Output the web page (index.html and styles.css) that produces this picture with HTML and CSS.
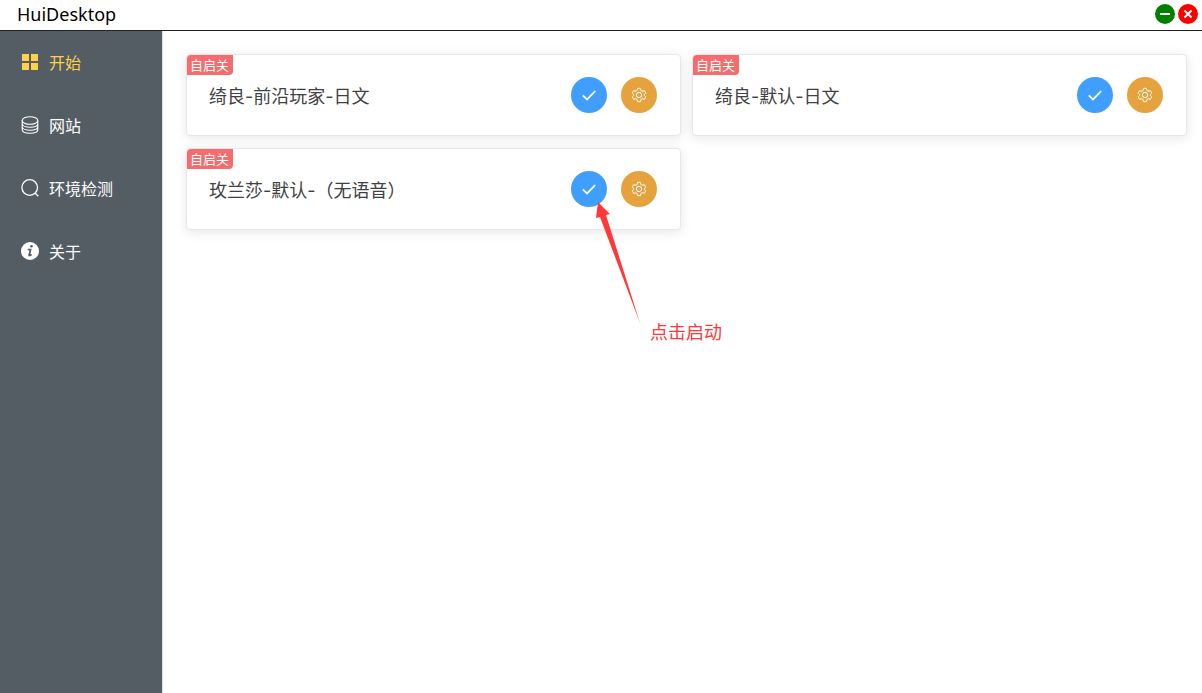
FILE: index.html
```html
<!DOCTYPE html>
<html lang="zh-CN">

<head>
    <meta charset="UTF-8" />
    <meta name="viewport" content="width=device-width, initial-scale=1.0" />
    <title>HuiDesktop</title>
    <link rel="stylesheet" href="styles.css">
</head>

<body>
    <!-- Shared icons -->
    <svg class="sprite" aria-hidden="true">
        <symbol id="check" viewBox="0 0 18 18">
            <path d="M2 9.500 6.800 14 16 4.500" fill="none" stroke="currentColor" stroke-width="2" />
        </symbol>
        <symbol id="gear" viewBox="0 0 18 18">
            <path d="M7.400 1.500h3.200l.6 2.500 1.400.8 2.400-.7 1.600 2.900-1.800 1.700v.6l1.800 1.700-1.600 2.900-2.400-.7-1.400.8-.6 2.500H7.400l-.6-2.500-1.400-.8-2.400.7-1.600-2.900 1.800-1.700v-.6L1.400 7l1.600-2.900 2.400.7 1.400-.8z" fill="none" stroke="currentColor" stroke-width="1.100" stroke-linejoin="round" />
            <circle cx="9" cy="9" r="3" fill="none" stroke="currentColor" stroke-width="1.100" />
        </symbol>
    </svg>

    <header class="titlebar">
        <h1>HuiDesktop</h1>
        <div class="window-buttons">
            <button class="minimize" aria-label="最小化">
                <svg viewBox="0 0 20 20"><path d="M5 10h10" /></svg>
            </button>
            <button class="close" aria-label="关闭">
                <svg viewBox="0 0 20 20"><path d="M6.500 6.500l7 7M13.500 6.500l-7 7" /></svg>
            </button>
        </div>
    </header>

    <div class="layout">
        <nav class="sidebar">
            <a class="active" href="#start">
                <svg viewBox="0 0 18 18" fill="currentColor">
                    <path d="M1 1h7v7H1zM10 1h7v7h-7zM1 10h7v7H1zM10 10h7v7h-7z" />
                </svg>
                开始
            </a>
            <a href="#sites">
                <svg viewBox="0 0 18 18" fill="none" stroke="currentColor" stroke-width="1.100">
                    <ellipse cx="9" cy="4.500" rx="7.800" ry="3.800" />
                    <path d="M1.200 4.500v9c0 5 15.600 5 15.600 0v-9M1.200 7.500c0 5 15.600 5 15.600 0M1.200 10.500c0 5 15.600 5 15.600 0" />
                </svg>
                网站
            </a>
            <a href="#check-env">
                <svg viewBox="0 0 18 18" fill="none" stroke="currentColor" stroke-width="1.300">
                    <circle cx="8.700" cy="8.500" r="7.800" />
                    <path d="M14 14l3.300 3.300" />
                </svg>
                环境检测
            </a>
            <a href="#about">
                <svg viewBox="0 0 18 18">
                    <circle cx="9" cy="9" r="9" fill="currentColor" />
                    <circle cx="10.500" cy="4.300" r="1.300" fill="#545c64" />
                    <path d="M6.700 7.500h2.900L8.100 13.200q0 1.200 2.500-.9" fill="none" stroke="#545c64" stroke-width="1.700" />
                </svg>
                关于
            </a>
        </nav>

        <main class="cards">
            <section class="card">
                <span class="tag">自启关</span>
                <h2>绮良-前沿玩家-日文</h2>
                <div class="actions">
                    <button class="start" aria-label="启动"><svg><use href="#check" /></svg></button>
                    <button class="settings" aria-label="设置"><svg><use href="#gear" /></svg></button>
                </div>
            </section>
            <section class="card">
                <span class="tag">自启关</span>
                <h2>绮良-默认-日文</h2>
                <div class="actions">
                    <button class="start" aria-label="启动"><svg><use href="#check" /></svg></button>
                    <button class="settings" aria-label="设置"><svg><use href="#gear" /></svg></button>
                </div>
            </section>
            <section class="card">
                <span class="tag">自启关</span>
                <h2>玫兰莎-默认-（无语音）</h2>
                <div class="actions">
                    <button class="start" aria-label="启动"><svg><use href="#check" /></svg></button>
                    <button class="settings" aria-label="设置"><svg><use href="#gear" /></svg></button>
                    <div class="hint">
                        <svg viewBox="0 0 44 122" fill="currentColor">
                            <path d="M2 0 14 12 10 13 44 121 4 15 0 16z" />
                        </svg>
                        <span>点击启动</span>
                    </div>
                </div>
            </section>
        </main>
    </div>
</body>

</html>
```

FILE: styles.css
```css
* {
    box-sizing: border-box;
}

body {
    display: flex;
    flex-direction: column;
    min-height: 100vh;
    margin: 0;
    background: #fff;
    color: #404145;
    font-family: Inter, 'Noto Sans CJK SC', sans-serif;
    font-size: 16px;
}

h1,
h2 {
    margin: 0;
    font-weight: 400;
}

button {
    display: flex;
    align-items: center;
    justify-content: center;
    padding: 0;
    border: 0;
    border-radius: 50%;
    color: #fff;
    cursor: pointer;
}

.sprite {
    position: absolute;
    width: 0;
    height: 0;
}

/* Title bar */
.titlebar {
    display: flex;
    align-items: center;
    justify-content: space-between;
    height: 31px;
    padding: 0 4px 2px 17px;
    border-bottom: 1px solid #222;
}

.titlebar h1 {
    color: #000;
    font-family: 'Noto Sans', sans-serif;
    font-size: 18px;
    line-height: 28px;
}

.window-buttons {
    display: flex;
    gap: 3px;
}

.window-buttons button {
    width: 20px;
    height: 20px;
}

.window-buttons svg {
    width: 20px;
    height: 20px;
    fill: none;
    stroke: currentColor;
    stroke-width: 2;
}

.minimize {
    background: green;
}

.close {
    background: red;
}

/* Sidebar */
.layout {
    display: flex;
    flex: 1;
}

.sidebar {
    flex: 0 0 163px;
    border-right: 1px solid #dcdfe6;
    background: #545c64;
}

.sidebar a {
    display: flex;
    align-items: center;
    gap: 10px;
    height: 63px;
    padding: 0 0 2px 21px;
    color: #fff;
    text-decoration: none;
}

.sidebar a.active {
    color: #ffd04b;
}

.sidebar svg {
    width: 18px;
    height: 18px;
}

/* Cards */
.cards {
    display: grid;
    flex: 1;
    grid-template-columns: 1fr 1fr;
    align-content: start;
    gap: 12px 11px;
    padding: 23px 15px 23px 23px;
}

.card {
    position: relative;
    display: flex;
    align-items: center;
    justify-content: space-between;
    padding: 22px 23px 22px 22px;
    border: 1px solid #e4e7ed;
    border-radius: 4px;
    background: #fff;
    box-shadow: 0 2px 12px rgba(0, 0, 0, 0.1);
}

.card h2 {
    padding-top: 4px;
    font-size: 18px;
    line-height: 28px;
}

.tag {
    position: absolute;
    top: 0;
    left: 0;
    padding: 0 4px 0 3px;
    border-radius: 4px 0;
    background: #f56c6c;
    color: #fff;
    font-size: 13px;
    line-height: 20px;
}

.actions {
    position: relative;
    display: flex;
    gap: 14px;
}

.actions button {
    width: 36px;
    height: 36px;
}

.actions button svg {
    width: 16px;
    height: 16px;
}

.start {
    background: #409eff;
}

.settings {
    background: #e6a23c;
}

/* Arrow pointing at the start button */
.hint {
    position: absolute;
    top: 31px;
    left: 25px;
    display: flex;
    align-items: flex-end;
    gap: 10px;
    color: #ff3838;
    font-size: 18px;
    line-height: 26px;
    white-space: nowrap;
    pointer-events: none;
}

.hint svg {
    width: 44px;
    height: 122px;
}

.hint span {
    margin-bottom: -22px;
}
```
